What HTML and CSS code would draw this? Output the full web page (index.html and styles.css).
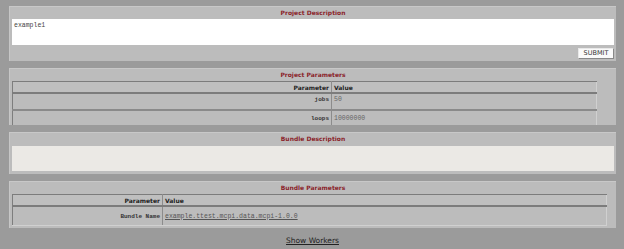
FILE: index.html
```html
<!DOCTYPE html>
<html>
<head>
<meta charset="utf-8">
<link rel="stylesheet" href="styles.css">
</head>
<body>
<div class="page">
  <section class="panel p1">
    <h2 class="title">Project Description</h2>
    <div class="textbox">example1</div>
    <div class="actions"><button class="submit">SUBMIT</button></div>
  </section>

  <section class="panel p2">
    <h2 class="title">Project Parameters</h2>
    <table class="params t1">
      <tr class="head"><th class="pcol">Parameter</th><th class="vcol">Value</th></tr>
      <tr class="row r1"><td class="pcol key">jobs</td><td class="vcol val">50</td></tr>
      <tr class="row r2"><td class="pcol key">loops</td><td class="vcol val">10000000</td></tr>
    </table>
  </section>

  <section class="panel p3">
    <h2 class="title">Bundle Description</h2>
    <div class="emptybox"></div>
  </section>

  <section class="panel p4">
    <h2 class="title">Bundle Parameters</h2>
    <table class="params t2">
      <tr class="head"><th class="pcol">Parameter</th><th class="vcol">Value</th></tr>
      <tr class="row r3"><td class="pcol key">Bundle Name</td><td class="vcol val"><a class="blink" href="#">example.ttest.mcpi.data.mcpi-1.0.0</a></td></tr>
    </table>
  </section>

  <div class="footer"><a class="workers" href="#">Show Workers</a></div>
</div>
</body>
</html>
```

FILE: styles.css
```css
html, body {
  margin: 0;
  padding: 0;
  background: #9b9b9b;
  width: 624px;
  height: 249px;
  overflow: hidden;
  font-family: "DejaVu Sans", Verdana, sans-serif;
}
.page {
  padding: 6px 8px 0 9px;
  display: flex;
  flex-direction: column;
  gap: 7px;
}
.panel {
  background: #bcbcbc;
  border-top: 1px solid #c8c8c8;
  border-left: 1px solid #c6c6c6;
  box-sizing: border-box;
  width: 607px;
  padding: 0 2px 0 2px;
  overflow: hidden;
}
.title {
  margin: 0;
  text-align: center;
  font-size: 6px;
  font-weight: bold;
  color: #8a1f2a;
  height: 12px;
  line-height: 12px;
}
.p1 { height: 55px; }
.textbox {
  background: #fff;
  height: 26px;
  font-family: "Liberation Mono", "Courier New", monospace;
  font-size: 6.5px;
  color: #444;
  padding: 3px 2px;
  box-sizing: border-box;
}
.actions {
  display: flex;
  justify-content: flex-end;
  padding-top: 3px;
}
.submit {
  background: #fafafa;
  border: 1px solid #e8e8e8;
  border-right-color: #888;
  border-bottom-color: #888;
  font-family: "DejaVu Sans", sans-serif;
  font-size: 6.5px;
  color: #333;
  width: 36px;
  height: 11px;
  padding: 0;
  line-height: 9px;
}
.p2 { height: 57px; }
.params {
  border-collapse: collapse;
  border-left: 1px solid #7e7e7e;
  border-right: 1px solid #d0d0d0;
  font-size: 6px;
}
.t1 { width: 585px; }
.t2 { width: 595px; }
.params th {
  font-weight: bold;
  color: #222;
  height: 10px;
  padding: 0 2px;
  border-top: 1px solid #7c7c7c;
  border-bottom: 2px solid #7c7c7c;
  background: #bfbfbf;
}
.params .pcol { text-align: right; border-right: 1px solid #8c8c8c; }
.params .vcol { text-align: left; }
.t1 .pcol { width: 314px; }
.t2 .pcol { width: 145px; }
.params td {
  padding: 0 2px;
  vertical-align: middle;
  border-top: 1px solid #d6d6d6;
}
.r1 td { height: 13px; vertical-align: top; padding-top: 2px; }
.r2 td { height: 14px; border-top: 2px solid #8a8a8a; }
.r3 td { height: 18px; border-bottom: 1px solid #d0d0d0; }
.key {
  font-family: "Liberation Mono", "Courier New", monospace;
  font-weight: bold;
  font-size: 6px;
  color: #333;
}
.val {
  font-family: "Liberation Mono", "Courier New", monospace;
  font-size: 6.5px;
  color: #666;
}
.blink { color: #555; text-decoration: underline; }
.p3 { height: 42px; }
.emptybox {
  background: #ebe9e5;
  height: 25px;
  margin-top: 1px;
}
.p4 { height: 47px; }
.footer {
  text-align: center;
  margin-top: -3px;
  line-height: 12px;
}
.workers {
  color: #222;
  font-size: 7.5px;
  font-family: "DejaVu Sans", sans-serif;
  text-decoration: underline;
}
```
